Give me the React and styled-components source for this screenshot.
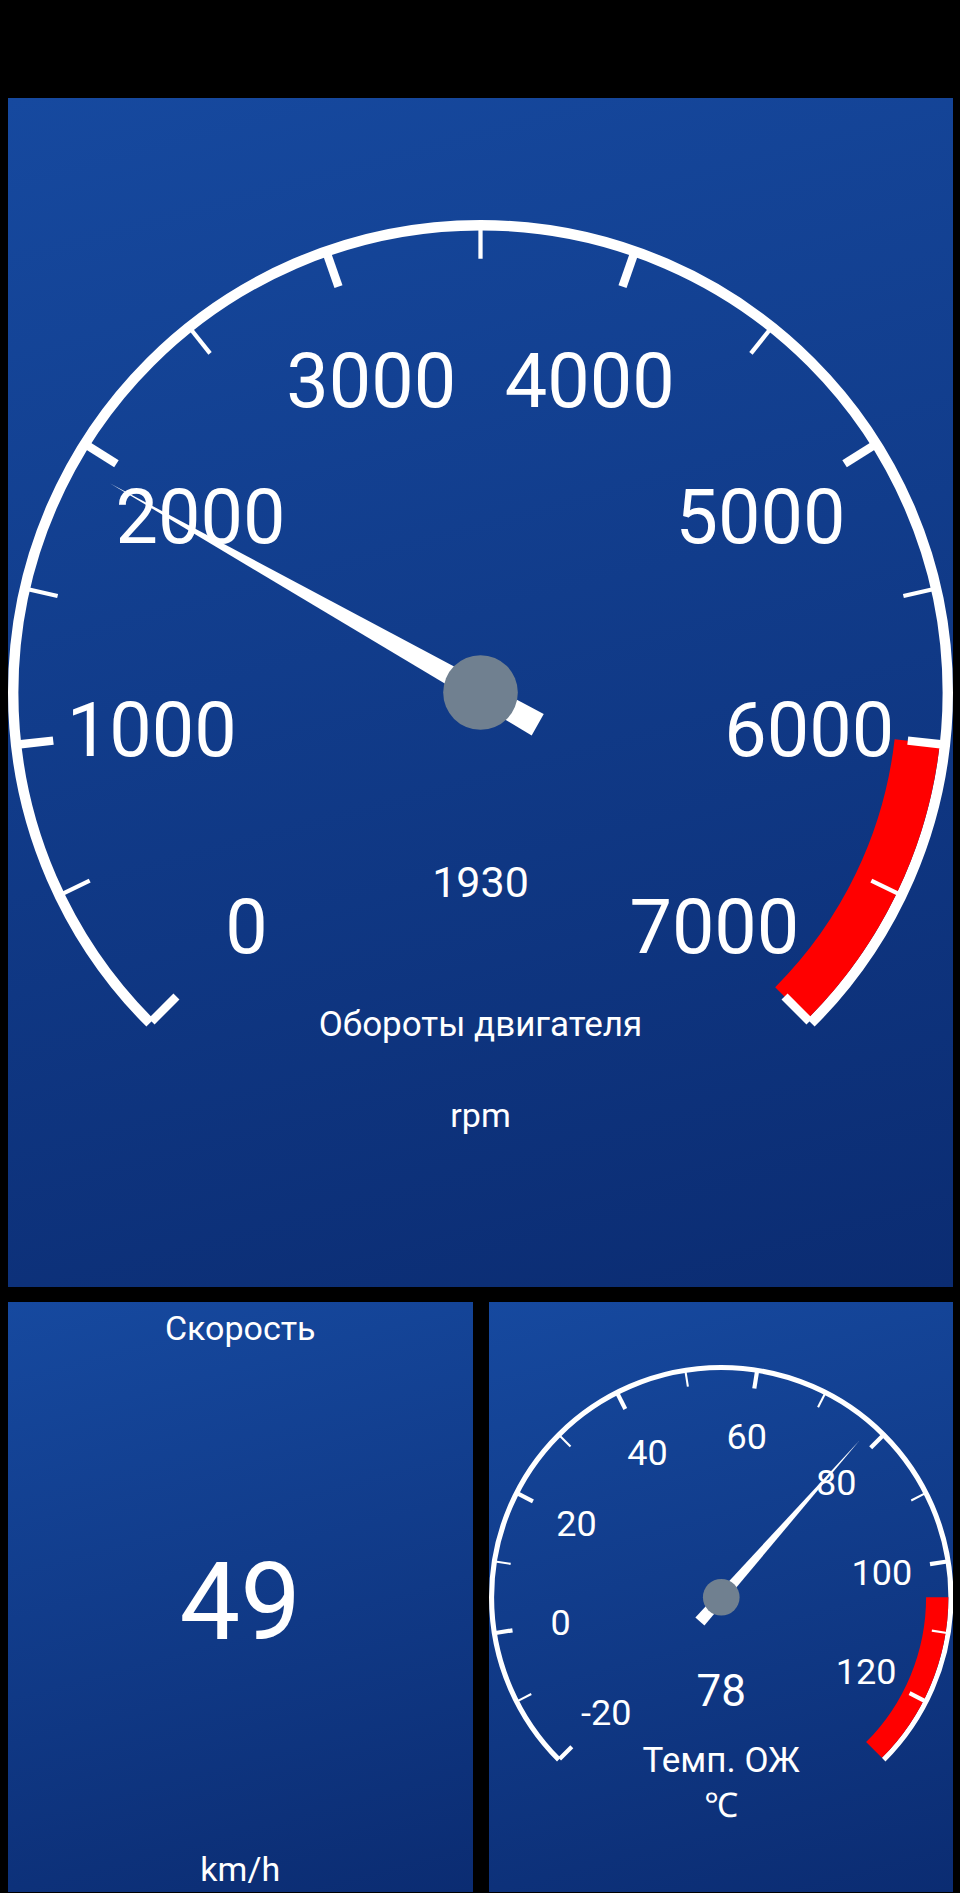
import React from "react";
import styled, { createGlobalStyle } from "styled-components";

const GlobalStyle = createGlobalStyle`
  html, body {
    margin: 0;
    padding: 0;
    background: #000;
  }
  body {
    font-family: Roboto, "Noto Sans", "DejaVu Sans", sans-serif;
  }
`;

const FONT = `Roboto, "Noto Sans", "DejaVu Sans", sans-serif`;

const Screen = styled.div`
  width: 960px;
  height: 1893px;
  box-sizing: border-box;
  padding: 98px 7px 1px 8px;
  display: flex;
  flex-direction: column;
  gap: 15px;
  background: #000;
`;

const Panel = styled.section`
  background: linear-gradient(165deg, #16499f 0%, #0b2c72 100%);
  display: flex;
  align-items: center;
  justify-content: center;
  overflow: hidden;
  min-width: 0;
  color: #fff;
`;

const MainPanel = styled(Panel)`
  height: 1189px;
  flex: none;
`;

const BottomRow = styled.div`
  display: grid;
  grid-template-columns: 1fr 1fr;
  gap: 16px;
  height: 590px;
  flex: none;
`;

const DigitalPanel = styled(Panel)`
  flex-direction: column;
  justify-content: space-between;
  padding: 6px 0 3px;
  box-sizing: border-box;
`;

const Caption = styled.div`
  font-family: ${FONT};
  font-size: 34px;
  line-height: 40px;
  color: #fff;
`;

const BigValue = styled.div`
  flex: 1;
  display: flex;
  align-items: center;
  justify-content: center;
  font-family: ${FONT};
  font-size: 108px;
  line-height: 1;
  color: #fff;
  padding-top: 6px;
`;

const Dial = styled.svg`
  display: block;
  width: 100%;
  height: auto;
  aspect-ratio: 1;
`;

const DialText = styled.text`
  fill: #fff;
  font-family: ${FONT};
  font-size: ${(p) => p.$size}px;
  text-anchor: middle;
`;

function Gauge({
  size,
  min,
  max,
  value,
  majorStep,
  minorStep,
  lastTick,
  redFrom,
  redTo,
  labels,
  labelScale,
  title,
  unit,
  valueSize,
}) {
  const R = size / 2;
  const cx = R;
  const cy = R;
  const ang = (v) => ((225 - ((v - min) / (max - min)) * 270) * Math.PI) / 180;
  const pt = (v, r) => [cx + r * Math.cos(ang(v)), cy - r * Math.sin(ang(v))];
  const arcPath = (r, from, to) => {
    const [x1, y1] = pt(from, r);
    const [x2, y2] = pt(to, r);
    const span = ((to - from) / (max - min)) * 270;
    return `M ${x1} ${y1} A ${r} ${r} 0 ${span > 180 ? 1 : 0} 1 ${x2} ${y2}`;
  };

  const sw = 0.022 * R;
  const inner = R - sw;
  const redW = 0.096 * R;

  const ticks = [];
  for (let v = min; v <= lastTick + 1e-6; v += minorStep) {
    const major = Math.abs(((v - min) / majorStep) % 1) < 1e-6;
    const len = major ? 0.068 * R : 0.06 * R;
    const [x1, y1] = pt(v, inner + sw * 0.3);
    const [x2, y2] = pt(v, inner - len);
    ticks.push(
      <line
        key={v}
        x1={x1}
        y1={y1}
        x2={x2}
        y2={y2}
        stroke="#fff"
        strokeWidth={major ? 0.018 * R : 0.009 * R}
      />
    );
  }

  const labelSize = labelScale * R;
  const labelEls = labels.map((v) => {
    const [x, y] = pt(v, 0.7 * R);
    return (
      <DialText key={v} x={x} y={y + 0.355 * labelSize} $size={labelSize}>
        {v}
      </DialText>
    );
  });

  const a = ang(value);
  const ux = Math.cos(a);
  const uy = -Math.sin(a);
  const px = -uy;
  const py = ux;
  const tipL = 0.9 * R;
  const tailL = 0.139 * R;
  const hw = 0.026 * R;
  const needle = [
    [cx + ux * tipL, cy + uy * tipL],
    [cx - ux * tailL + px * hw, cy - uy * tailL + py * hw],
    [cx - ux * tailL - px * hw, cy - uy * tailL - py * hw],
  ]
    .map((p) => p.join(","))
    .join(" ");

  return (
    <Dial viewBox={`0 0 ${size} ${size}`}>
      <path
        d={arcPath(R - sw / 2, min, max)}
        fill="none"
        stroke="#fff"
        strokeWidth={sw}
      />
      <path
        d={arcPath(inner - redW / 2, redFrom, redTo)}
        fill="none"
        stroke="#ff0000"
        strokeWidth={redW}
      />
      {ticks}
      {labelEls}
      <polygon points={needle} fill="#fff" />
      <circle cx={cx} cy={cy} r={0.079 * R} fill="#708090" />
      <DialText
        x={cx}
        y={cy + 0.4 * R + 0.355 * valueSize}
        $size={valueSize}
      >
        {value}
      </DialText>
      <DialText x={cx} y={cy + 0.7 * R + 0.355 * 35} $size={35}>
        {title}
      </DialText>
      <DialText x={cx} y={cy + 0.893 * R + 0.355 * 34} $size={34}>
        {unit}
      </DialText>
    </Dial>
  );
}

export default function App() {
  return (
    <>
      <GlobalStyle />
      <Screen>
        <MainPanel>
          <Gauge
            size={945}
            min={0}
            max={7000}
            value={1930}
            majorStep={1000}
            minorStep={500}
            lastTick={7000}
            redFrom={6000}
            redTo={7000}
            labels={[0, 1000, 2000, 3000, 4000, 5000, 6000, 7000]}
            labelScale={0.16}
            title="Обороты двигателя"
            unit="rpm"
            valueSize={43}
          />
        </MainPanel>
        <BottomRow>
          <DigitalPanel>
            <Caption>Скорость</Caption>
            <BigValue>49</BigValue>
            <Caption>km/h</Caption>
          </DigitalPanel>
          <Panel>
            <Gauge
              size={464.5}
              min={-20}
              max={130}
              value={78}
              majorStep={20}
              minorStep={10}
              lastTick={120}
              redFrom={105}
              redTo={130}
              labels={[-20, 0, 20, 40, 60, 80, 100, 120]}
              labelScale={0.155}
              title="Темп. ОЖ"
              unit="℃"
              valueSize={44}
            />
          </Panel>
        </BottomRow>
      </Screen>
    </>
  );
}
